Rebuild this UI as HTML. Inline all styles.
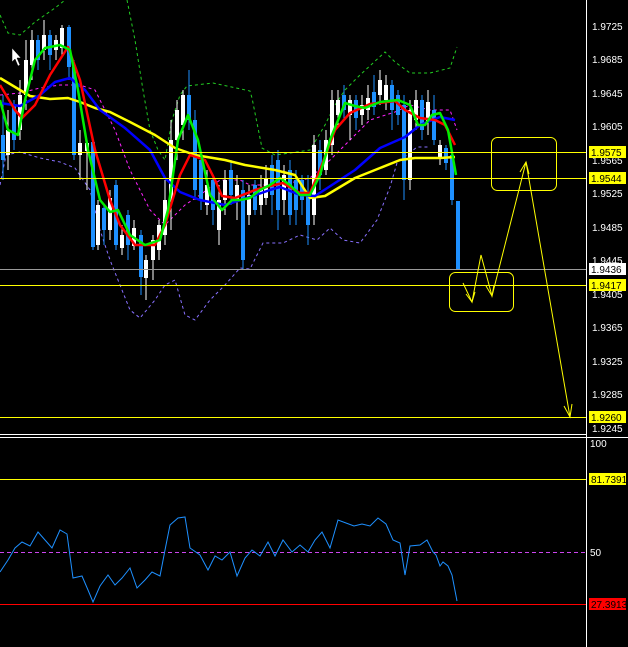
<!DOCTYPE html>
<html><head><meta charset="utf-8"><style>
html,body{margin:0;padding:0;background:#000;}
svg{display:block}
text{font-family:"Liberation Sans",sans-serif;font-size:10px;fill:#fff}
</style></head><body>
<svg width="628" height="647" viewBox="0 0 628 647" xmlns="http://www.w3.org/2000/svg">
<rect width="628" height="647" fill="#000"/>
<!-- bands -->
<g fill="none" stroke-width="1" stroke-dasharray="3,3">
<polyline stroke="#22cc22" points="0,15 8,33 20,35 35,22 55,8 65,0"/>
<polyline stroke="#22cc22" points="127,0 135,40 143,90 150,130 158,150 165,160 172,120 180,95 187,86 213,83 250,91 252,98 262,148 275,155 290,153 310,150 325,125 335,105 345,90 360,75 385,52 395,62 410,73 430,73 450,68 457,47"/>
<polyline stroke="#8870ff" points="0,185 6,155 20,152 40,158 60,162 75,168 90,190 100,230 110,260 120,285 130,310 140,318 155,300 165,285 175,280 185,315 195,320 210,300 225,285 240,268 250,269 263,243 283,243 300,235 317,240 330,228 343,240 360,243 377,220 390,187 397,163 417,147 430,147"/>
<polyline stroke="#ff22ff" points="0,95 20,93 40,88 60,85 80,85 95,90 115,130 130,170 150,210 165,225 185,205 200,195 220,180 240,180 250,185 270,185 290,183 310,178 330,160 350,140 370,120 395,112 410,105 430,110 450,110 457,130"/>
</g>
<!-- candles -->
<g id="c">
<g stroke-width="1">
<line x1="3" y1="95" x2="3" y2="180" stroke="#1e90ff"/><rect x="1" y="135" width="4" height="25" fill="#1e90ff"/>
<line x1="8" y1="110" x2="8" y2="170" stroke="#fff"/><rect x="6" y="130" width="4" height="25" fill="#fff"/>
<line x1="14" y1="100" x2="14" y2="150" stroke="#1e90ff"/><rect x="12" y="105" width="4" height="35" fill="#1e90ff"/>
<line x1="20" y1="80" x2="20" y2="140" stroke="#fff"/><rect x="18" y="95" width="4" height="35" fill="#fff"/>
<line x1="26" y1="40" x2="26" y2="110" stroke="#fff"/><rect x="24" y="60" width="4" height="35" fill="#fff"/>
<line x1="32" y1="30" x2="32" y2="80" stroke="#fff"/><rect x="30" y="40" width="4" height="25" fill="#fff"/>
<line x1="38" y1="35" x2="38" y2="70" stroke="#1e90ff"/><rect x="36" y="40" width="4" height="20" fill="#1e90ff"/>
<line x1="44" y1="20" x2="44" y2="60" stroke="#fff"/><rect x="42" y="35" width="4" height="15" fill="#fff"/>
<line x1="50" y1="30" x2="50" y2="70" stroke="#1e90ff"/><rect x="48" y="35" width="4" height="20" fill="#1e90ff"/>
<line x1="56" y1="35" x2="56" y2="60" stroke="#fff"/><rect x="54" y="40" width="4" height="10" fill="#fff"/>
<line x1="62" y1="25" x2="62" y2="55" stroke="#fff"/><rect x="60" y="28" width="4" height="20" fill="#fff"/>
<line x1="69" y1="25" x2="69" y2="80" stroke="#1e90ff"/><rect x="67" y="27" width="4" height="40" fill="#1e90ff"/>
<line x1="74" y1="60" x2="74" y2="160" stroke="#1e90ff"/><rect x="72" y="65" width="4" height="90" fill="#1e90ff"/>
<line x1="80" y1="130" x2="80" y2="180" stroke="#fff"/><rect x="78" y="143" width="4" height="12" fill="#fff"/>
<line x1="87" y1="140" x2="87" y2="190" stroke="#fff"/><rect x="85" y="143" width="4" height="8" fill="#fff"/>
<line x1="93" y1="140" x2="93" y2="250" stroke="#1e90ff"/><rect x="91" y="142" width="4" height="105" fill="#1e90ff"/>
<line x1="98" y1="200" x2="98" y2="250" stroke="#fff"/><rect x="96" y="205" width="4" height="40" fill="#fff"/>
<line x1="104" y1="205" x2="104" y2="245" stroke="#1e90ff"/><rect x="102" y="208" width="4" height="22" fill="#1e90ff"/>
<line x1="110" y1="190" x2="110" y2="240" stroke="#fff"/><rect x="108" y="198" width="4" height="32" fill="#fff"/>
<line x1="116" y1="180" x2="116" y2="250" stroke="#1e90ff"/><rect x="114" y="185" width="4" height="60" fill="#1e90ff"/>
<line x1="122" y1="225" x2="122" y2="255" stroke="#fff"/><rect x="120" y="235" width="4" height="13" fill="#fff"/>
<line x1="128" y1="210" x2="128" y2="260" stroke="#1e90ff"/><rect x="126" y="215" width="4" height="30" fill="#1e90ff"/>
<line x1="134" y1="220" x2="134" y2="250" stroke="#fff"/><rect x="132" y="228" width="4" height="18" fill="#fff"/>
<line x1="141" y1="230" x2="141" y2="295" stroke="#1e90ff"/><rect x="139" y="235" width="4" height="42" fill="#1e90ff"/>
<line x1="146" y1="255" x2="146" y2="300" stroke="#fff"/><rect x="144" y="260" width="4" height="18" fill="#fff"/>
<line x1="153" y1="235" x2="153" y2="280" stroke="#fff"/><rect x="151" y="240" width="4" height="20" fill="#fff"/>
<line x1="159" y1="220" x2="159" y2="260" stroke="#fff"/><rect x="157" y="225" width="4" height="25" fill="#fff"/>
<line x1="165" y1="180" x2="165" y2="245" stroke="#fff"/><rect x="163" y="200" width="4" height="35" fill="#fff"/>
<line x1="171" y1="120" x2="171" y2="230" stroke="#fff"/><rect x="169" y="140" width="4" height="60" fill="#fff"/>
<line x1="177" y1="100" x2="177" y2="160" stroke="#fff"/><rect x="175" y="110" width="4" height="30" fill="#fff"/>
<line x1="183" y1="90" x2="183" y2="140" stroke="#fff"/><rect x="181" y="95" width="4" height="30" fill="#fff"/>
<line x1="189" y1="70" x2="189" y2="130" stroke="#1e90ff"/><rect x="187" y="95" width="4" height="25" fill="#1e90ff"/>
<line x1="195" y1="110" x2="195" y2="200" stroke="#1e90ff"/><rect x="193" y="120" width="4" height="70" fill="#1e90ff"/>
<line x1="201" y1="150" x2="201" y2="210" stroke="#1e90ff"/><rect x="199" y="160" width="4" height="40" fill="#1e90ff"/>
<line x1="207" y1="170" x2="207" y2="215" stroke="#fff"/><rect x="205" y="185" width="4" height="20" fill="#fff"/>
<line x1="213" y1="175" x2="213" y2="225" stroke="#1e90ff"/><rect x="211" y="180" width="4" height="30" fill="#1e90ff"/>
<line x1="219" y1="185" x2="219" y2="245" stroke="#fff"/><rect x="217" y="200" width="4" height="30" fill="#fff"/>
<line x1="225" y1="170" x2="225" y2="215" stroke="#fff"/><rect x="223" y="180" width="4" height="20" fill="#fff"/>
<line x1="231" y1="160" x2="231" y2="205" stroke="#1e90ff"/><rect x="229" y="170" width="4" height="25" fill="#1e90ff"/>
<line x1="237" y1="175" x2="237" y2="220" stroke="#fff"/><rect x="235" y="185" width="4" height="15" fill="#fff"/>
<line x1="243" y1="180" x2="243" y2="270" stroke="#1e90ff"/><rect x="241" y="190" width="4" height="70" fill="#1e90ff"/>
<line x1="249" y1="185" x2="249" y2="225" stroke="#fff"/><rect x="247" y="195" width="4" height="20" fill="#fff"/>
<line x1="255" y1="180" x2="255" y2="215" stroke="#1e90ff"/><rect x="253" y="185" width="4" height="25" fill="#1e90ff"/>
<line x1="261" y1="175" x2="261" y2="215" stroke="#fff"/><rect x="259" y="190" width="4" height="15" fill="#fff"/>
<line x1="266" y1="165" x2="266" y2="205" stroke="#fff"/><rect x="264" y="178" width="4" height="20" fill="#fff"/>
<line x1="272" y1="155" x2="272" y2="215" stroke="#1e90ff"/><rect x="270" y="165" width="4" height="30" fill="#1e90ff"/>
<line x1="278" y1="150" x2="278" y2="230" stroke="#1e90ff"/><rect x="276" y="160" width="4" height="50" fill="#1e90ff"/>
<line x1="284" y1="165" x2="284" y2="215" stroke="#fff"/><rect x="282" y="175" width="4" height="25" fill="#fff"/>
<line x1="290" y1="160" x2="290" y2="225" stroke="#1e90ff"/><rect x="288" y="170" width="4" height="45" fill="#1e90ff"/>
<line x1="296" y1="170" x2="296" y2="225" stroke="#1e90ff"/><rect x="294" y="180" width="4" height="30" fill="#1e90ff"/>
<line x1="302" y1="175" x2="302" y2="215" stroke="#1e90ff"/><rect x="300" y="180" width="4" height="20" fill="#1e90ff"/>
<line x1="308" y1="175" x2="308" y2="245" stroke="#1e90ff"/><rect x="306" y="195" width="4" height="30" fill="#1e90ff"/>
<line x1="314" y1="135" x2="314" y2="225" stroke="#fff"/><rect x="312" y="145" width="4" height="70" fill="#fff"/>
<line x1="320" y1="140" x2="320" y2="190" stroke="#1e90ff"/><rect x="318" y="150" width="4" height="25" fill="#1e90ff"/>
<line x1="326" y1="130" x2="326" y2="175" stroke="#fff"/><rect x="324" y="140" width="4" height="30" fill="#fff"/>
<line x1="332" y1="90" x2="332" y2="155" stroke="#fff"/><rect x="330" y="100" width="4" height="45" fill="#fff"/>
<line x1="338" y1="90" x2="338" y2="125" stroke="#fff"/><rect x="336" y="100" width="4" height="15" fill="#fff"/>
<line x1="344" y1="85" x2="344" y2="120" stroke="#1e90ff"/><rect x="342" y="95" width="4" height="15" fill="#1e90ff"/>
<line x1="350" y1="95" x2="350" y2="140" stroke="#fff"/><rect x="348" y="100" width="4" height="15" fill="#fff"/>
<line x1="356" y1="95" x2="356" y2="130" stroke="#1e90ff"/><rect x="354" y="100" width="4" height="18" fill="#1e90ff"/>
<line x1="362" y1="95" x2="362" y2="125" stroke="#fff"/><rect x="360" y="105" width="4" height="10" fill="#fff"/>
<line x1="368" y1="85" x2="368" y2="120" stroke="#fff"/><rect x="366" y="98" width="4" height="12" fill="#fff"/>
<line x1="374" y1="75" x2="374" y2="115" stroke="#1e90ff"/><rect x="372" y="92" width="4" height="15" fill="#1e90ff"/>
<line x1="380" y1="70" x2="380" y2="105" stroke="#fff"/><rect x="378" y="80" width="4" height="15" fill="#fff"/>
<line x1="386" y1="75" x2="386" y2="110" stroke="#fff"/><rect x="384" y="85" width="4" height="15" fill="#fff"/>
<line x1="392" y1="80" x2="392" y2="130" stroke="#1e90ff"/><rect x="390" y="85" width="4" height="25" fill="#1e90ff"/>
<line x1="398" y1="90" x2="398" y2="125" stroke="#1e90ff"/><rect x="396" y="95" width="4" height="20" fill="#1e90ff"/>
<line x1="404" y1="95" x2="404" y2="200" stroke="#1e90ff"/><rect x="402" y="105" width="4" height="75" fill="#1e90ff"/>
<line x1="410" y1="100" x2="410" y2="190" stroke="#fff"/><rect x="408" y="110" width="4" height="70" fill="#fff"/>
<line x1="416" y1="90" x2="416" y2="130" stroke="#fff"/><rect x="414" y="100" width="4" height="20" fill="#fff"/>
<line x1="422" y1="95" x2="422" y2="140" stroke="#1e90ff"/><rect x="420" y="100" width="4" height="30" fill="#1e90ff"/>
<line x1="428" y1="90" x2="428" y2="135" stroke="#fff"/><rect x="426" y="102" width="4" height="20" fill="#fff"/>
<line x1="434" y1="95" x2="434" y2="145" stroke="#1e90ff"/><rect x="432" y="110" width="4" height="30" fill="#1e90ff"/>
<line x1="440" y1="140" x2="440" y2="165" stroke="#fff"/><rect x="438" y="145" width="4" height="12" fill="#fff"/>
<line x1="446" y1="145" x2="446" y2="170" stroke="#1e90ff"/><rect x="444" y="148" width="4" height="15" fill="#1e90ff"/>
<line x1="452" y1="150" x2="452" y2="205" stroke="#1e90ff"/><rect x="450" y="155" width="4" height="45" fill="#1e90ff"/>
<rect x="456" y="201" width="4" height="68" fill="#1e90ff"/>
</g></g>
<!-- MAs -->
<g fill="none" stroke-width="2.5" stroke-linejoin="round">
<polyline stroke="#ffff00" points="0,78 30,96 50,99 68,98 80,102 95,108 110,112 130,122 155,135 175,148 195,155 225,160 245,165 275,170 295,175 310,198 325,196 355,178 380,168 400,160 415,158 440,158 455,157"/>
<polyline stroke="#0000ff" points="0,103 20,106 40,95 55,82 70,78 85,90 100,110 125,128 150,150 165,178 180,192 200,200 225,205 250,197 270,190 280,187 300,195 315,196 335,183 355,170 380,148 405,137 420,125 440,117 455,120"/>
<polyline stroke="#ff0000" points="0,85 15,110 22,118 35,105 50,75 68,47 80,80 95,150 110,200 120,225 135,245 155,245 165,225 180,175 190,155 205,160 215,180 222,196 235,198 255,190 270,186 283,183 300,193 310,193 320,170 335,130 350,113 370,104 395,101 405,110 420,118 435,120 445,125 455,145"/>
<polyline stroke="#00ee00" points="0,100 8,130 18,135 25,100 35,60 45,48 60,45 70,50 78,90 88,150 100,200 110,212 118,210 130,235 145,245 160,240 168,210 178,140 188,115 198,140 210,195 222,210 232,200 240,200 250,198 260,190 270,185 280,178 290,185 300,195 310,195 320,175 330,140 345,103 355,106 365,108 380,102 398,100 410,105 418,125 425,125 432,115 440,113 448,130 456,175"/>
</g>
<!-- horizontal lines -->
<line x1="0" y1="152.5" x2="586" y2="152.5" stroke="#ffff00"/>
<line x1="0" y1="178.5" x2="586" y2="178.5" stroke="#ffff00"/>
<line x1="0" y1="269.5" x2="586" y2="269.5" stroke="#9a9a9a"/>
<line x1="0" y1="285.5" x2="586" y2="285.5" stroke="#ffff00"/>
<line x1="0" y1="417.5" x2="586" y2="417.5" stroke="#ffff00"/>
<line x1="0" y1="434.5" x2="586" y2="434.5" stroke="#fff"/>
<line x1="0" y1="437.5" x2="628" y2="437.5" stroke="#fff"/>
<line x1="586.5" y1="0" x2="586.5" y2="647" stroke="#fff"/>
<!-- drawings -->
<g fill="none" stroke="#ffff00" stroke-width="1">
<rect x="449.5" y="272.5" width="64" height="39" rx="6"/>
<rect x="491.5" y="137.5" width="65" height="53" rx="6"/>
<polyline points="463,283 472,302 481,255 492,296 526,162 570,417"/>
<polyline points="466,294 472,302 475,292"/>
<polyline points="486,286 492,296 494,285"/>
<polyline points="520,172 526,162 529,174"/>
<polyline points="564,406 570,417 572,404"/>
</g>
<!-- cursor -->
<polygon points="12,48 12,62 15,59 18,66 20,65 17,58 21,58" fill="#fff" stroke="#000" stroke-width="0.5"/>
<!-- axis ticks/labels -->
<g>
<text x="592" y="30">1.9725</text><text x="592" y="63">1.9685</text><text x="592" y="97">1.9645</text>
<text x="592" y="130">1.9605</text><text x="592" y="164">1.9565</text><text x="592" y="197">1.9525</text>
<text x="592" y="231">1.9485</text><text x="592" y="264">1.9445</text><text x="592" y="298">1.9405</text>
<text x="592" y="331">1.9365</text><text x="592" y="365">1.9325</text><text x="592" y="398">1.9285</text>
<text x="592" y="432">1.9245</text>
<rect x="589" y="146" width="37" height="12" fill="#ffff00"/><text x="591" y="156" style="fill:#000">1.9575</text>
<rect x="589" y="172" width="37" height="12" fill="#ffff00"/><text x="591" y="182" style="fill:#000">1.9544</text>
<rect x="589" y="263" width="37" height="12" fill="#fff"/><text x="591" y="273" style="fill:#000">1.9436</text>
<rect x="589" y="279" width="37" height="12" fill="#ffff00"/><text x="591" y="289" style="fill:#000">1.9417</text>
<rect x="589" y="411" width="37" height="12" fill="#ffff00"/><text x="591" y="421" style="fill:#000">1.9260</text>
</g>
<!-- subwindow -->
<line x1="0" y1="479.5" x2="586" y2="479.5" stroke="#ffff00"/>
<line x1="0" y1="552.5" x2="586" y2="552.5" stroke="#cc44ee" stroke-dasharray="4,3"/>
<line x1="0" y1="604.5" x2="586" y2="604.5" stroke="#ff0000"/>
<polyline fill="none" stroke="#1e90ff" stroke-width="1" points="0,572 8,560 15,548 22,542 30,546 38,532 45,540 52,548 60,530 67,534 73,578 82,576 88,590 93,602 100,586 108,575 115,585 122,578 130,568 137,588 145,580 152,572 160,576 165,550 170,525 178,518 185,517 190,548 200,555 208,570 215,556 222,560 230,552 237,576 245,558 252,550 260,556 268,542 275,556 283,540 292,552 300,545 308,552 315,540 322,532 330,548 338,520 346,523 354,526 362,524 370,526 378,518 386,524 393,540 400,543 405,575 410,546 420,545 427,540 433,552 436,555 440,566 443,562 448,566 452,575 457,601"/>
<text x="590" y="447">100</text>
<rect x="589" y="473" width="37" height="12" fill="#ffff00"/><text x="591" y="483" style="fill:#000">81.7391</text>
<text x="590" y="556">50</text>
<rect x="589" y="598" width="37" height="12" fill="#ff0000"/><text x="591" y="608" style="fill:#000">27.3913</text>
</svg>
</body></html>
